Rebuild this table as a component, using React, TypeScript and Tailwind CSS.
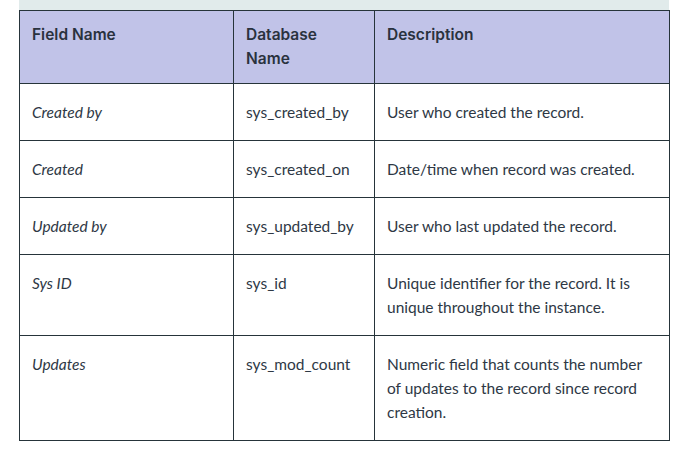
import React from "react";

const rows: { f: string; d: string; desc: string }[] = [
  { f: "Created by", d: "sys_created_by", desc: "User who created the record." },
  { f: "Created", d: "sys_created_on", desc: "Date/time when record was created." },
  { f: "Updated by", d: "sys_updated_by", desc: "User who last updated the record." },
  { f: "Sys ID", d: "sys_id", desc: "Unique identifier for the record. It is unique throughout the instance." },
  { f: "Updates", d: "sys_mod_count", desc: "Numeric field that counts the number of updates to the record since record creation." },
];

export default function App() {
  return (
    <div className="w-[685px] h-[457px] bg-white">
      <div className="ml-[19px] w-[650px]">
        <div className="h-[10px] bg-[#e1ebeb]" />
        <table className="w-[650px] table-fixed border-collapse border border-[#26343a] text-[15.5px] leading-[24px]" style={{ fontFamily: "Lato, 'Noto Sans', sans-serif" }}>
          <colgroup>
            <col className="w-[214px]" />
            <col className="w-[141px]" />
            <col className="w-[295px]" />
          </colgroup>
          <thead>
            <tr className="bg-[#c1c3e8] border-b border-b-[#5a67ac] align-top">
              {["Field Name", "Database Name", "Description"].map((h) => (
                <th key={h} className="border-x border-[#26343a] px-3 pt-3 pb-3 text-left font-semibold text-[#2a323e] text-[15.5px] leading-[24px]" style={{ fontFamily: "Inter, sans-serif" }}>
                  {h}
                </th>
              ))}
            </tr>
          </thead>
          <tbody>
            {rows.map((r) => (
              <tr key={r.d} className="align-top border-t border-[#26343a]">
                <td className="border border-[#26343a] px-3 pt-4 pb-4 italic text-[#2e3845]">{r.f}</td>
                <td className="border border-[#26343a] px-3 pt-4 pb-4 text-[#2e3845]">{r.d}</td>
                <td className="border border-[#26343a] pl-3 pr-5 pt-4 pb-4 text-[#2e3845]">{r.desc}</td>
              </tr>
            ))}
          </tbody>
        </table>
      </div>
    </div>
  );
}
